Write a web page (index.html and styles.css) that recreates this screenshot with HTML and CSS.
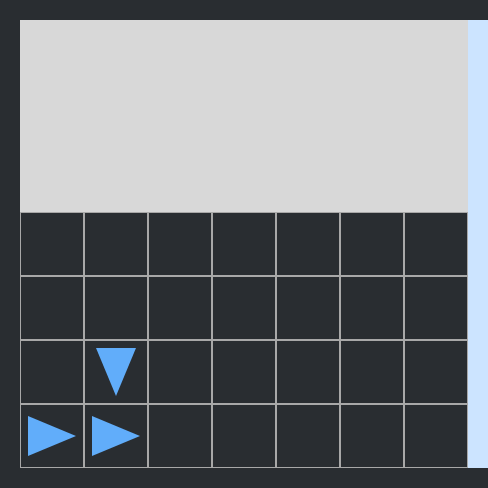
FILE: index.html
```html
<!DOCTYPE html>
<html>
<head>
<meta charset="utf-8">
<link rel="stylesheet" href="styles.css">
</head>
<body>
<div class="frame">
  <div class="main">
    <div class="panel"></div>
    <div class="grid">
      <div class="cell"></div><div class="cell"></div><div class="cell"></div><div class="cell"></div><div class="cell"></div><div class="cell"></div><div class="cell"></div>
      <div class="cell"></div><div class="cell"></div><div class="cell"></div><div class="cell"></div><div class="cell"></div><div class="cell"></div><div class="cell"></div>
      <div class="cell"></div>
      <div class="cell"><svg class="tri-down" width="40" height="48" viewBox="0 0 40 48"><polygon points="0,0 40,0 20,48" /></svg></div>
      <div class="cell"></div><div class="cell"></div><div class="cell"></div><div class="cell"></div><div class="cell"></div>
      <div class="cell"><svg class="tri-right" width="48" height="40" viewBox="0 0 48 40"><polygon points="0,0 48,20 0,40" /></svg></div>
      <div class="cell"><svg class="tri-right" width="48" height="40" viewBox="0 0 48 40"><polygon points="0,0 48,20 0,40" /></svg></div>
      <div class="cell"></div><div class="cell"></div><div class="cell"></div><div class="cell"></div><div class="cell"></div>
    </div>
  </div>
  <div class="strip"></div>
</div>
</body>
</html>
```

FILE: styles.css
```css
html, body {
  margin: 0;
  padding: 0;
  background: #292d31;
  width: 488px;
  height: 488px;
  overflow: hidden;
}
.frame {
  display: flex;
  padding: 20px 0 20px 20px;
}
.main {
  width: 448px;
  display: flex;
  flex-direction: column;
}
.panel {
  height: 192px;
  background: #d8d8d8;
}
.grid {
  display: grid;
  grid-template-columns: repeat(7, 64px);
  grid-template-rows: repeat(4, 64px);
}
.cell {
  box-sizing: border-box;
  border: 1px solid #a8a8a8;
  display: flex;
  align-items: center;
  justify-content: center;
}
.tri-down, .tri-right {
  fill: #61adfa;
  display: block;
}
.tri-down {
  margin-top: -1px;
}
.tri-right {
  margin-left: -1px;
}
.strip {
  width: 20px;
  height: 448px;
  background: #cce4ff;
}
```
